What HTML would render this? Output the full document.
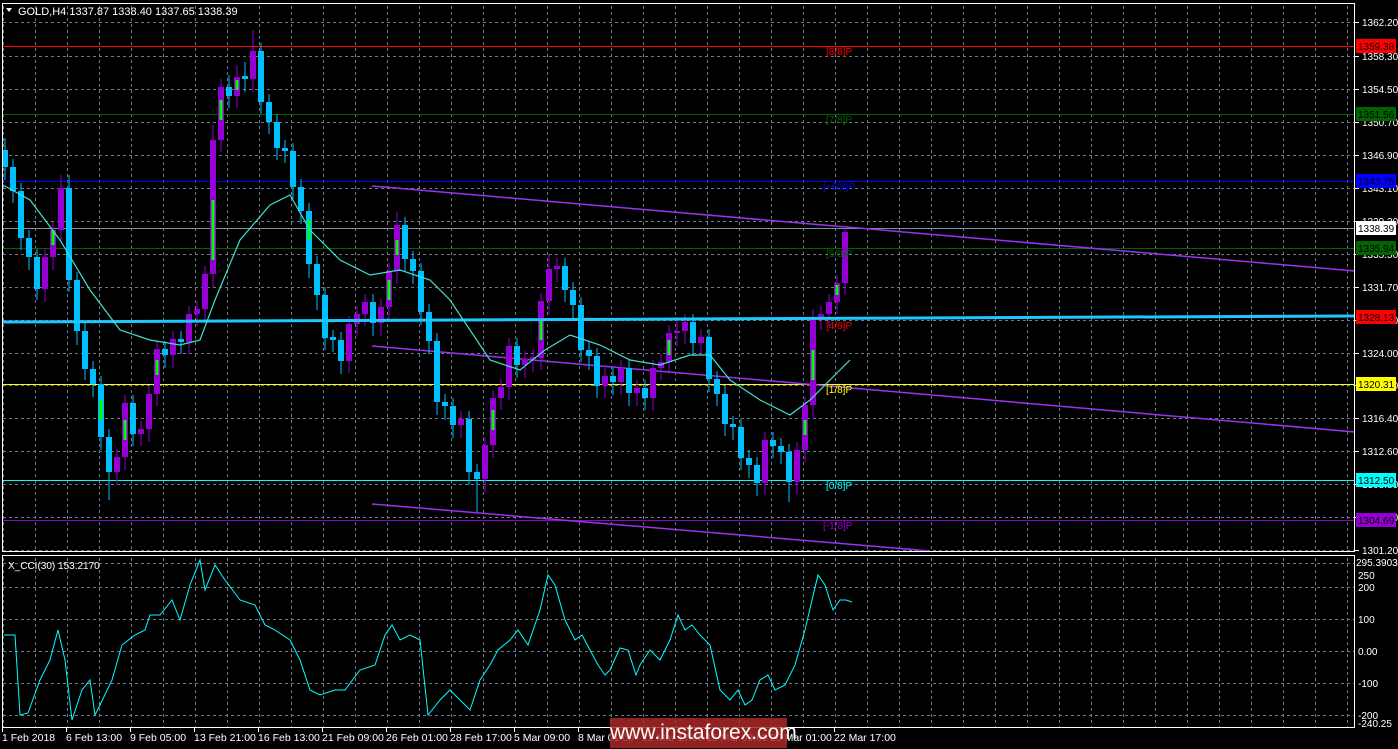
<!DOCTYPE html>
<html><head><meta charset="utf-8"><style>
html,body{margin:0;padding:0;background:#000;width:1398px;height:749px;overflow:hidden}
svg{position:absolute;left:0;top:0;font-family:"Liberation Sans",sans-serif}
.wm{position:absolute;left:610px;top:718px;width:177px;height:30px;background:rgba(170,40,40,0.85);color:#fff;font:21px "Liberation Sans",sans-serif;line-height:30px;text-align:center}
</style></head><body>
<svg width="1398" height="749" xmlns="http://www.w3.org/2000/svg">
<defs>
<pattern id="vg" patternUnits="userSpaceOnUse" x="3" y="0" width="32" height="6"><rect x="0" y="0" width="1" height="3" fill="#6e7a8a"/></pattern>
</defs>
<rect x="3" y="4" width="1352" height="547" fill="url(#vg)"/>
<rect x="3" y="556" width="1352" height="171" fill="url(#vg)"/>
<path stroke="#6e7a8a" stroke-dasharray="3,3" fill="none" d="M3 22.5H1355M3 56.5H1355M3 89.5H1355M3 122.5H1355M3 155.5H1355M3 188.5H1355M3 221.5H1355M3 254.5H1355M3 287.5H1355M3 320.5H1355M3 353.5H1355M3 385.5H1355M3 418.5H1355M3 451.5H1355M3 484.5H1355M3 517.5H1355M3 550.5H1355M3 563.5H1355M3 587.5H1355M3 619.5H1355M3 651.5H1355M3 683.5H1355M3 715.5H1355"/>
<line x1="3" y1="46.5" x2="1355" y2="46.5" stroke="#ff0000"/>
<line x1="3" y1="114.5" x2="1355" y2="114.5" stroke="#006400"/>
<line x1="3" y1="181.5" x2="1355" y2="181.5" stroke="#0000ff"/>
<line x1="3" y1="228.5" x2="1355" y2="228.5" stroke="#8090a0"/>
<line x1="3" y1="248.5" x2="1355" y2="248.5" stroke="#006400"/>
<line x1="3" y1="384.5" x2="1355" y2="384.5" stroke="#ffff00"/>
<line x1="3" y1="480.5" x2="1355" y2="480.5" stroke="#00ffff"/>
<line x1="3" y1="520.5" x2="1355" y2="520.5" stroke="#9400d3"/>
<line x1="372" y1="186" x2="1355" y2="271" stroke="#9933ee" stroke-width="1.5"/>
<line x1="372" y1="346" x2="1355" y2="432" stroke="#9933ee" stroke-width="1.5"/>
<line x1="372" y1="504" x2="930" y2="551" stroke="#9933ee" stroke-width="1.5"/>
<path fill="none" stroke="#00bfff" stroke-width="1" d="M5 138V180M13 159V203M21 183V250M29 230V270M37 249V300M69 175V292M77 272V345M85 323V380M93 361V397M101 376V450M109 429V500M133 395V446M165 341V368M181 331V354M229 75V108M245 62V92M261 43V114M269 94V134M277 114V160M285 140V163M293 143V199M301 179V224M309 203V278M317 256V310M325 287V350M333 330V352M341 332V374M373 294V336M405 217V272M413 251V284M421 263V325M429 304V354M437 333V415M445 394V420M453 398V438M469 411V485M477 464V512M517 338V378M565 258V302M573 282V318M581 297V362M589 342V370M597 348V398M613 368V395M629 360V406M645 380V410M693 314V356M709 329V392M717 371V406M725 386V436M733 416V440M741 419V470M749 450V478M757 457V496M773 432V458M781 438V464M789 444V502"/>
<path fill="none" stroke="#9400d3" stroke-width="1" d="M45 249V302M53 222V270M61 175V242M117 449V485M125 395V470M141 421V446M149 386V442M157 341V406M173 331V368M189 306V354M197 301V326M205 266V321M213 125V287M221 79V152M237 65V108M253 30V92M349 316V373M357 306V336M365 294V326M381 299V336M389 263V320M397 212V284M461 411V438M485 437V492M493 390V458M501 379V410M509 338V400M525 351V378M533 350V372M541 293V370M549 255V314M557 258V282M605 368V398M621 360V395M637 380V406M653 360V411M661 354V380M669 325V374M677 318V346M685 314V344M701 329V356M765 432V495M797 442V495M805 397V462M813 309V418M821 306V330M829 294V326M837 275V314M845 226V295"/>
<path fill="none" stroke="#00bfff" stroke-width="6" d="M5 150V167M13 167V191M21 191V238M29 238V257M37 257V289M69 188V280M77 280V331M85 331V369M93 369V384M101 384V437M109 437V472M133 403V434M165 349V355M181 339V342M229 87V96M245 76V79M261 51V102M269 102V122M277 122V148M285 148V151M293 151V187M301 187V211M309 211V264M317 264V295M325 295V338M333 337V340M341 340V361M373 302V323M405 225V259M413 259V271M421 271V312M429 312V341M437 341V402M445 402V406M453 406V425M469 419V472M477 472V479M517 346V365M565 266V290M573 290V305M581 305V350M589 350V356M597 356V386M613 376V382M629 368V393M645 388V398M693 322V343M709 337V379M717 379V394M725 394V424M733 424V427M741 427V458M749 458V465M757 465V483M773 440V446M781 446V452M789 452V482"/>
<path fill="none" stroke="#9400d3" stroke-width="6" d="M45 257V289M53 230V257M61 188V230M117 457V472M125 403V457M141 429V434M149 394V429M157 349V394M173 339V355M189 314V342M197 309V314M205 274V309M213 140V274M221 87V140M237 77V96M253 51V79M349 324V361M357 314V324M365 302V314M381 307V323M389 271V307M397 225V271M461 419V425M485 445V479M493 398V445M501 387V398M509 346V387M525 359V365M533 357V359M541 301V358M549 269V301M557 266V269M605 376V386M621 368V382M637 388V393M653 368V398M661 362V368M669 333V362M677 331V333M685 322V331M701 337V343M765 440V483M797 450V482M805 405V450M813 317V405M821 314V317M829 302V314M837 283V302M845 232V283"/>
<path fill="none" stroke="#00ff00" stroke-width="3" d="M53 230V245M213 200V260M221 100V120M237 80V90M389 280V300M493 410V430M541 320V340M669 340V355M813 350V380M837 285V295M101 400V420M309 220V240M125 420V440M157 360V375M397 240V255M805 420V435"/>
<line x1="3" y1="322" x2="1355" y2="316" stroke="#1ec8ff" stroke-width="3"/>
<polyline fill="none" stroke="#40e0d0" stroke-width="1.2" points="3,185 30,200 60,240 90,290 120,330 150,340 180,345 200,340 215,300 240,240 270,205 290,195 310,230 340,260 370,275 400,270 430,280 450,300 470,330 490,360 520,370 545,350 570,335 600,345 630,360 660,365 690,355 710,355 730,380 760,400 790,415 810,400 830,380 850,360"/>
<g font-size="10">
<text x="826" y="55" fill="#ff0000">[8/8]P</text>
<text x="826" y="123" fill="#006400">[7/8]P</text>
<text x="823" y="190" fill="#0000ff">[+6/8]P</text>
<text x="826" y="257" fill="#006400">[5/8]P</text>
<text x="826" y="329" fill="#ff0000">[4/8]P</text>
<text x="826" y="393" fill="#ffff00">[1/8]P</text>
<text x="826" y="489" fill="#00ffff">[0/8]P</text>
<text x="823" y="529" fill="#9400d3">[-1/8]P</text>
</g>
<polyline fill="none" stroke="#00ffff" stroke-width="1" points="4,635 15,635 20,715 28,713 40,680 50,660 58,630 65,660 72,720 82,690 90,680 95,715 100,705 112,680 122,645 135,635 145,630 150,615 160,615 172,600 180,620 190,585 200,560 205,590 215,565 225,580 240,600 255,605 265,625 275,630 290,640 300,660 310,690 320,695 335,690 345,690 360,670 375,665 385,635 392,625 400,640 410,635 420,640 428,715 440,700 450,690 460,700 470,710 480,680 490,665 498,650 510,640 518,630 528,645 540,610 548,575 555,585 565,620 575,640 582,635 590,650 598,665 605,675 610,670 620,648 628,650 636,675 640,665 650,650 660,660 670,640 678,615 685,630 692,625 700,635 710,645 720,690 730,700 738,690 745,705 752,700 760,680 768,675 775,690 785,685 795,665 805,630 812,600 818,575 825,585 833,610 840,600 846,600 852,602"/>
<rect x="2.5" y="3.5" width="1352" height="548" fill="none" stroke="#fff"/>
<rect x="2.5" y="555.5" width="1352" height="172" fill="none" stroke="#fff"/>
<polygon points="6,8 12,8 9,12" fill="#fff"/>
<text x="18" y="15" fill="#fff" font-size="11">GOLD,H4  1337.87 1338.40 1337.65 1338.39</text>
<text x="8" y="569" fill="#fff" font-size="10">X_CCI(30) 153.2170</text>
<g font-size="10" fill="#fff">
<path stroke="#fff" d="M1355 22.5h4M1355 56.5h4M1355 89.5h4M1355 122.5h4M1355 155.5h4M1355 188.5h4M1355 221.5h4M1355 254.5h4M1355 287.5h4M1355 320.5h4M1355 353.5h4M1355 385.5h4M1355 418.5h4M1355 451.5h4M1355 484.5h4M1355 517.5h4M1355 550.5h4"/>
<text x="1362" y="26">1362.20</text><text x="1362" y="60">1358.30</text><text x="1362" y="93">1354.50</text><text x="1362" y="126">1350.70</text><text x="1362" y="159">1346.90</text><text x="1362" y="192">1343.10</text><text x="1362" y="225">1339.30</text><text x="1362" y="258">1335.50</text><text x="1362" y="291">1331.70</text><text x="1362" y="324">1327.90</text><text x="1362" y="357">1324.00</text><text x="1362" y="389">1320.20</text><text x="1362" y="422">1316.40</text><text x="1362" y="455">1312.60</text><text x="1362" y="488">1308.80</text><text x="1362" y="521">1305.00</text><text x="1362" y="554">1301.20</text>
<rect x="1356" y="39" width="40" height="14" fill="#ff0000"/><text x="1358" y="50" fill="#000">1359.38</text>
<rect x="1356" y="107" width="40" height="14" fill="#006400"/><text x="1358" y="118" fill="#000">1351.56</text>
<rect x="1356" y="174" width="40" height="14" fill="#0000ff"/><text x="1358" y="185" fill="#000">1343.75</text>
<rect x="1356" y="221" width="40" height="14" fill="#fff"/><text x="1358" y="232" fill="#000">1338.39</text>
<rect x="1356" y="241" width="40" height="14" fill="#006400"/><text x="1358" y="252" fill="#000">1335.94</text>
<rect x="1356" y="310" width="40" height="14" fill="#ff0000"/><text x="1358" y="321" fill="#000">1328.13</text>
<rect x="1356" y="377" width="40" height="14" fill="#ffff00"/><text x="1358" y="388" fill="#000">1320.31</text>
<rect x="1356" y="473" width="40" height="14" fill="#00ffff"/><text x="1358" y="484" fill="#000">1312.50</text>
<rect x="1356" y="513" width="40" height="14" fill="#9400d3"/><text x="1358" y="524" fill="#000">1304.69</text>
<text x="1356" y="566">295.3903</text><text x="1358" y="579">250</text><text x="1358" y="591">200</text><text x="1358" y="623">100</text><text x="1358" y="655">0.00</text><text x="1358" y="687">-100</text><text x="1358" y="719">-200</text><text x="1358" y="727">-240.25</text>
</g>
<g font-size="10.5" fill="#fff">
<path stroke="#fff" d="M2.5 728v4M66.5 728v4M130.5 728v4M194.5 728v4M258.5 728v4M322.5 728v4M386.5 728v4M450.5 728v4M514.5 728v4M578.5 728v4M642.5 728v4M706.5 728v4M770.5 728v4M834.5 728v4"/>
<text x="2" y="741">1 Feb 2018</text><text x="66" y="741">6 Feb 13:00</text><text x="130" y="741">9 Feb 05:00</text><text x="194" y="741">13 Feb 21:00</text><text x="258" y="741">16 Feb 13:00</text><text x="322" y="741">21 Feb 09:00</text><text x="386" y="741">26 Feb 01:00</text><text x="450" y="741">28 Feb 17:00</text><text x="514" y="741">5 Mar 09:00</text><text x="578" y="741">8 Mar 01:00</text><text x="642" y="741">12 Mar 17:00</text><text x="706" y="741">15 Mar 09:00</text><text x="770" y="741">20 Mar 01:00</text><text x="834" y="741">22 Mar 17:00</text>
</g>
</svg>
<div class="wm">www.instaforex.com</div>
</body></html>
